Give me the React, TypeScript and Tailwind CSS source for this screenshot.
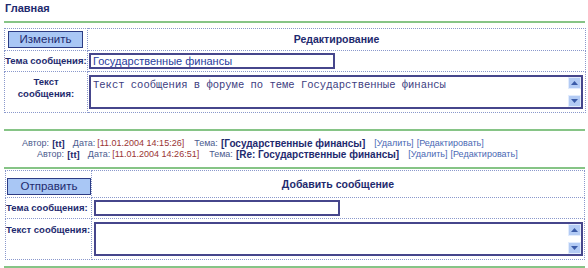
import type { ReactNode } from "react";

const sans = { fontFamily: '"Liberation Sans", Arial, sans-serif' };

function ScrollButton({ up }: { up: boolean }) {
  return (
    <div className="flex h-[12px] w-[13px] items-center justify-center border border-[#e2ecfd] bg-[#b3cbf4]">
      <svg width="7" height="4" viewBox="0 0 7 4">
        <path d={up ? "M0 4 L3.5 0 L7 4Z" : "M0 0 L3.5 4 L7 0Z"} fill="#3b5ba8" />
      </svg>
    </div>
  );
}

function FakeTextarea({ width, children }: { width: string; children?: ReactNode }) {
  return (
    <div className={`flex h-[34px] border-2 border-[#46468c] bg-white ${width}`}>
      <div className="flex-1 px-[2px] pt-[2px] font-['Liberation_Mono',monospace] text-[10.5px] leading-[12px] text-[#3c3c80]">{children}</div>
      <div className="flex flex-col justify-between">
        <ScrollButton up />
        <ScrollButton up={false} />
      </div>
    </div>
  );
}

function FakeInput({ value }: { value?: string }) {
  return (
    <div className="h-[16px] w-[246px] border-2 border-[#46468c] bg-white px-[2px] text-[11px] leading-[12px] text-[#283c9c]">{value}</div>
  );
}

function Button({ label, width }: { label: string; width: string }) {
  return (
    <div className={`flex h-[17px] items-center justify-center border border-[#2c3c84] bg-[#a9c7f5] text-[11.5px] text-[#1e2a6e] ${width}`}>{label}</div>
  );
}

function Post({ indent, date, theme }: { indent: string; date: string; theme: string }) {
  return (
    <div className={`flex h-[11px] items-center text-[9px] leading-[11px] whitespace-pre ${indent}`}>
      <span className="text-[#4b5a8e]">Автор:</span>
      <span className="ml-[3px] text-[9.5px] font-bold text-[#1e2a6e]">[tt]</span>
      <span className="ml-[8px] text-[#4b5a8e]">Дата:</span>
      <span className="ml-[2px] text-[#9a3434]">[{date}]</span>
      <span className="ml-[10px] text-[#4b5a8e]">Тема:</span>
      <span className="ml-[3px] text-[10px] font-bold text-[#1e2a6e]">[{theme}]</span>
      <span className="ml-[9px] text-[#4a68b4]">[Удалить]</span>
      <span className="ml-[3px] text-[#4a68b4]">[Редактировать]</span>
    </div>
  );
}

const cell = "border border-dotted border-[#8a98cc]";

export default function App() {
  return (
    <div className="h-[268px] w-[588px] overflow-hidden bg-white pl-[4px]" style={sans}>
      <div className="h-[16px] pl-[1px] text-[11px] leading-[16px] font-bold text-[#1e2a6e]">Главная</div>
      <div className="mt-[5px] h-[2px] w-[581px] bg-[#86c486]" />

      <table className="mt-[5px] w-[582px] table-fixed border-collapse border border-dotted border-[#8a98cc]">
        <tbody>
          <tr className="h-[22px]">
            <td className={`${cell} w-[83px] px-[3px] align-middle`}>
              <Button label="Изменить" width="w-[75px]" />
            </td>
            <td className={`${cell} text-center text-[10.5px] font-bold text-[#1e2a6e]`}>Редактирование</td>
          </tr>
          <tr className="h-[21px]">
            <td className={`${cell} text-[9.5px] font-bold whitespace-nowrap text-[#1e2a6e]`}>Тема сообщения:</td>
            <td className={`${cell} pl-[1px]`}>
              <FakeInput value="Государственные финансы" />
            </td>
          </tr>
          <tr className="h-[41px]">
            <td className={`${cell} align-top pt-[4px] text-center text-[9.5px] leading-[12px] font-bold text-[#1e2a6e]`}>
              Текст<br />сообщения:
            </td>
            <td className={`${cell} pl-[1px]`}>
              <FakeTextarea width="w-[494px]">Текст сообщения в форуме по теме Государственные финансы</FakeTextarea>
            </td>
          </tr>
        </tbody>
      </table>

      <div className="mt-[16px] h-[2px] w-[581px] bg-[#86c486]" />

      <div className="mt-[7px]">
        <Post indent="pl-[18px]" date="11.01.2004 14:15:26" theme="Государственные финансы" />
        <Post indent="pl-[33px]" date="11.01.2004 14:26:51" theme="Re: Государственные финансы" />
      </div>

      <div className="mt-[7px] h-[2px] w-[581px] bg-[#86c486]" />

      <table className="ml-[1px] mt-[1px] w-[580px] table-fixed border-collapse border border-dotted border-[#8a98cc]">
        <tbody>
          <tr className="h-[27px]">
            <td className={`${cell} w-[86px] px-[1px] align-bottom pb-[2px]`}>
              <Button label="Отправить" width="w-[84px]" />
            </td>
            <td className={`${cell} align-bottom pb-[4px] text-center text-[10.5px] font-bold text-[#1e2a6e]`}>Добавить сообщение</td>
          </tr>
          <tr className="h-[21px]">
            <td className={`${cell} text-[9.5px] font-bold whitespace-nowrap text-[#1e2a6e]`}>Тема сообщения:</td>
            <td className={`${cell} pl-[2px]`}>
              <FakeInput />
            </td>
          </tr>
          <tr className="h-[41px]">
            <td className={`${cell} align-top pt-[5px] text-[9.5px] leading-[12px] font-bold whitespace-nowrap text-[#1e2a6e]`}>Текст сообщения:</td>
            <td className={`${cell} pl-[2px]`}>
              <FakeTextarea width="w-[489px]" />
            </td>
          </tr>
        </tbody>
      </table>

      <div className="mt-[6px] h-[2px] w-[581px] bg-[#86c486]" />
    </div>
  );
}
